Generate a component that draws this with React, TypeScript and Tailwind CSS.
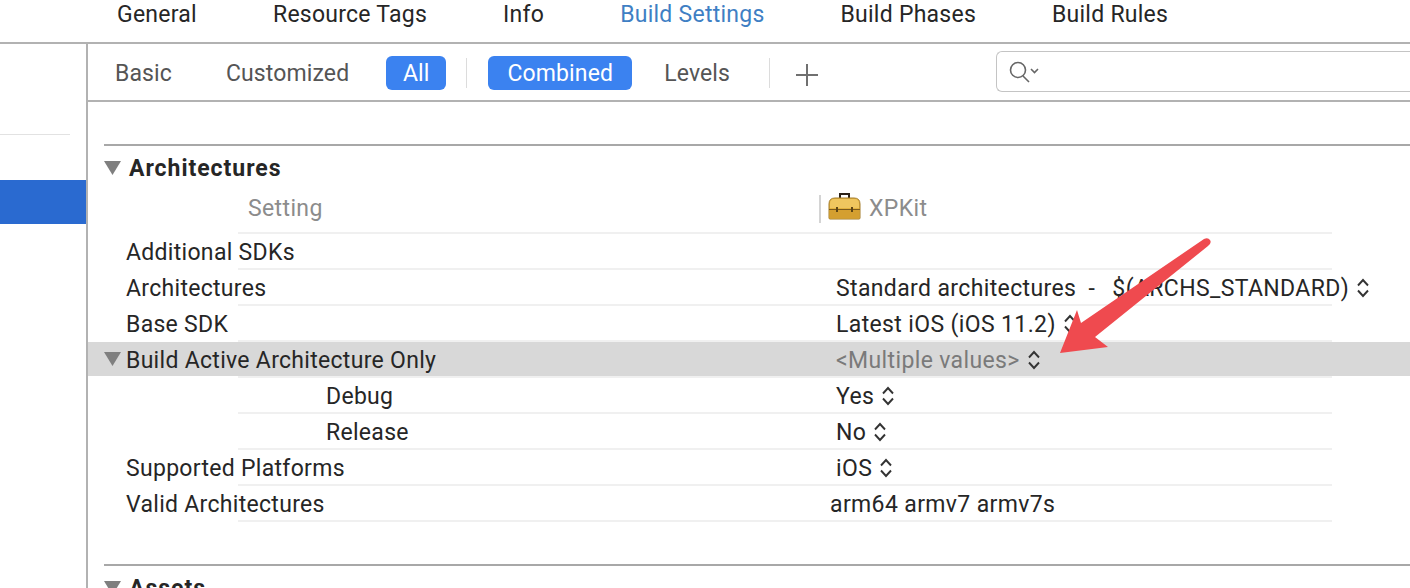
function Stepper({ className = "text-[#333]" }: { className?: string }) {
  return (
    <svg className={`w-[14px] h-[22px] shrink-0 ${className}`} viewBox="0 0 14 22" fill="none" stroke="currentColor" strokeWidth="1.9">
      <path d="M2 8.5 7 3l5 5.5" />
      <path d="M2 13.5 7 19l5-5.5" />
    </svg>
  );
}

function Triangle({ className = "" }: { className?: string }) {
  return (
    <svg className={`w-[17px] h-[14px] shrink-0 ${className}`} viewBox="0 0 17 14">
      <path d="M0 0h17L8.5 14z" fill="#7f7f7f" />
    </svg>
  );
}

function Briefcase() {
  return (
    <svg className="w-[33px] h-[28px] shrink-0" viewBox="0 0 33 28" fill="none">
      <path d="M12 6V2h9v4" stroke="#2b2118" strokeWidth="2" />
      <path d="M1 12q0-6 6-6h19q6 0 6 6v14q0 1-1 1H2q-1 0-1-1z" fill="#e3b23e" stroke="#a47c2a" />
      <path d="M2 12q0-5 5-5h19q5 0 5 5v4H2z" fill="#efc65f" />
      <rect x="1.500" y="18" width="30" height="8.500" fill="#d49f30" />
      <path d="M1 17.500h31" stroke="#7a5a1c" />
      <path d="M9 15v5M24 15v5" stroke="#5d4515" strokeWidth="2" />
    </svg>
  );
}

function RowLine() {
  return <div className="ml-[150px] w-[1094px] h-[2px] bg-[#f0f0f0]" />;
}

function Row({ label, value, selected, sub, open, muted, stepper = true, shift }: {
  label: string;
  value: string;
  selected?: boolean;
  sub?: boolean;
  open?: boolean;
  muted?: boolean;
  stepper?: boolean;
  shift?: boolean;
}) {
  return (
    <div>
      <div className={`h-[34px] flex items-center pl-[16px] pt-[2px] ${selected ? "bg-[#d8d8d8]" : ""}`}>
        <div className="w-[22px] shrink-0 -mt-[2px]">{open && <Triangle />}</div>
        <div className={`w-[710px] shrink-0 tracking-[0.3px] ${sub ? "pl-[200px]" : ""}`}>{label}</div>
        <div className={`flex items-center gap-[7px] whitespace-pre ${muted ? "text-[#7a7a7a]" : ""} ${shift ? "-ml-[6px]" : ""}`}>
          <span>{value}</span>
          {stepper && <Stepper />}
        </div>
      </div>
      <RowLine />
    </div>
  );
}

export default function App() {
  const tabs = ["General", "Resource Tags", "Info", "Build Settings", "Build Phases", "Build Rules"];

  return (
    <div className="relative w-[1410px] h-[588px] overflow-hidden bg-white text-[23px] leading-none tracking-[0.37px] text-[#262626] font-['Roboto',sans-serif]">
      {/* Tabs */}
      <div className="h-[44px] border-b-2 border-[#b2b2b2] pb-[13px] pl-[117px] flex items-center gap-[76px] whitespace-nowrap tracking-[0.25px]">
        {tabs.map((t) => (
          <span key={t} className={t === "Build Settings" ? "text-[#3f7fc4]" : ""}>{t}</span>
        ))}
      </div>

      <div className="flex h-[544px]">
        {/* Sidebar */}
        <div className="w-[88px] shrink-0 border-r-2 border-[#b2b2b2]">
          <div className="mt-[90px] w-[70px] h-[1px] bg-[#e2e2e2]" />
          <div className="mt-[45px] h-[44px] bg-[#2a6ad0]" />
        </div>

        <div className="flex-1 min-w-0">
          {/* Filter bar */}
          <div className="h-[58px] border-b-2 border-[#b2b2b2] flex items-center pt-[2px] whitespace-nowrap text-[#555] tracking-[0.12px]">
            <span className="ml-[27px] shrink-0">Basic</span>
            <span className="ml-[54px] shrink-0">Customized</span>
            <span className="ml-[37px] w-[60px] h-[34px] shrink-0 rounded-[6px] bg-[#3b82f0] text-white flex items-center justify-center">All</span>
            <div className="ml-[20px] w-[1px] h-[30px] shrink-0 bg-[#dcdcdc]" />
            <span className="ml-[21px] w-[144px] h-[34px] shrink-0 rounded-[6px] bg-[#3b82f0] text-white flex items-center justify-center">Combined</span>
            <span className="ml-[32px] shrink-0">Levels</span>
            <div className="ml-[39px] w-[1px] h-[30px] shrink-0 bg-[#dcdcdc]" />
            <svg className="ml-[25px] w-[24px] h-[24px] mt-[4px] shrink-0" viewBox="0 0 24 24" stroke="#707070" strokeWidth="2">
              <path d="M12 1v22M1 12h22" />
            </svg>
            <div className="ml-[177px] w-[430px] h-[41px] -mt-[3px] shrink-0 rounded-l-[6px] border border-[#c4c4c4] border-r-0 flex items-center pl-[12px]">
              <svg className="w-[32px] h-[24px]" viewBox="0 0 32 24" fill="none" stroke="#666" strokeWidth="1.600">
                <circle cx="9" cy="10" r="7.500" />
                <path d="m14 16 6 6" />
                <path d="m22 9 3.500 3.500L29 9" />
              </svg>
            </div>
          </div>

          {/* Architectures */}
          <div className="mt-[42px] ml-[16px] h-[2px] bg-[#a8a8a8]" />
          <div className="h-[42px] pl-[16px] flex items-center gap-[8px] pt-[2px]">
            <Triangle />
            <span className="font-bold tracking-[0.97px]">Architectures</span>
          </div>
          <div className="h-[44px] flex items-center pb-[3px] text-[#8c8c8c]">
            <span className="ml-[160px] w-[571px] shrink-0">Setting</span>
            <div className="w-[2px] h-[28px] bg-[#d4d4d4]" />
            <div className="ml-[7px] -mt-[5px]"><Briefcase /></div>
            <span className="ml-[8px]">XPKit</span>
          </div>
          <RowLine />

          <Row label="Additional SDKs" value="" stepper={false} />
          <Row label="Architectures" value={"Standard architectures  -  \u2009$(ARCHS_STANDARD)"} />
          <Row label="Base SDK" value="Latest iOS (iOS 11.2)" />
          <Row label="Build Active Architecture Only" value="<Multiple values>" selected open muted />
          <Row label="Debug" value="Yes" sub />
          <Row label="Release" value="No" sub />
          <Row label="Supported Platforms" value="iOS" />
          <Row label="Valid Architectures" value="arm64 armv7 armv7s" stepper={false} shift />

          {/* Assets */}
          <div className="mt-[42px] ml-[16px] h-[2px] bg-[#a8a8a8]" />
          <div className="h-[42px] pl-[16px] flex items-center gap-[8px] pt-[2px]">
            <Triangle />
            <span className="font-bold tracking-[0.97px]">Assets</span>
          </div>
        </div>
      </div>

      {/* Annotation arrow */}
      <svg className="absolute left-[1050px] top-[230px] w-[170px] h-[130px]" viewBox="1050 230 170 130">
        <path d="M1204 239Q1208 237 1210 240 1212 243 1208 246L1095 337 1108 347 1060 353 1077 310 1081 323Z" fill="#ef4a4f" />
      </svg>
    </div>
  );
}
